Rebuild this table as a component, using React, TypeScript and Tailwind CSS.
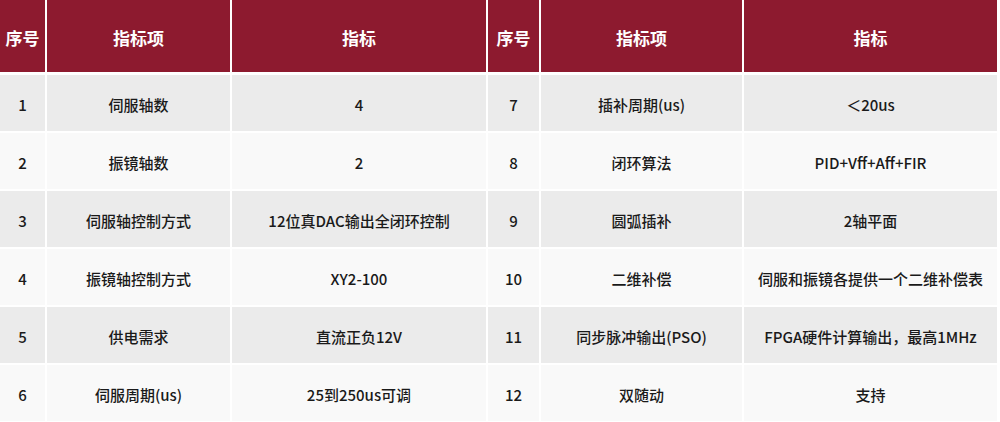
import * as React from "react";

type Row = [string, string, string, string, string, string];

const rows: Row[] = [
  ["1", "伺服轴数", "4", "7", "插补周期(us)", "＜20us"],
  ["2", "振镜轴数", "2", "8", "闭环算法", "PID+Vff+Aff+FIR"],
  ["3", "伺服轴控制方式", "12位真DAC输出全闭环控制", "9", "圆弧插补", "2轴平面"],
  ["4", "振镜轴控制方式", "XY2-100", "10", "二维补偿", "伺服和振镜各提供一个二维补偿表"],
  ["5", "供电需求", "直流正负12V", "11", "同步脉冲输出(PSO)", "FPGA硬件计算输出，最高1MHz"],
  ["6", "伺服周期(us)", "25到250us可调", "12", "双随动", "支持"],
];

const headers = ["序号", "指标项", "指标", "序号", "指标项", "指标"];

export default function App() {
  return (
    <div
      className="h-[422px] w-[1000px] overflow-hidden bg-white"
      style={{ fontFamily: '"Noto Sans CJK SC", "Noto Sans", sans-serif' }}
    >
      <div className="grid w-[997px] grid-cols-[45px_183px_254px_51px_201px_253px] gap-x-[2px]">
        {headers.map((h, i) => (
          <div
            key={i}
            className="flex h-[72px] items-center justify-center bg-[#8d1a2f] pt-1 text-[17px] font-bold text-white"
          >
            {h}
          </div>
        ))}
      </div>

      <div className="mt-[3px] grid w-[997px] grid-cols-[45px_183px_254px_51px_201px_253px] gap-x-[2px] gap-y-[2px]">
        {rows.map((r, ri) =>
          r.map((cell, ci) => (
            <div
              key={`${ri}-${ci}`}
              className={
                "flex h-[56px] items-center justify-center pt-1 text-[15px] font-medium text-[#1a1a1a] " +
                (ri % 2 === 0 ? "bg-[#ebebeb]" : "bg-[#f9f9f9]")
              }
            >
              {cell}
            </div>
          )),
        )}
      </div>
    </div>
  );
}
